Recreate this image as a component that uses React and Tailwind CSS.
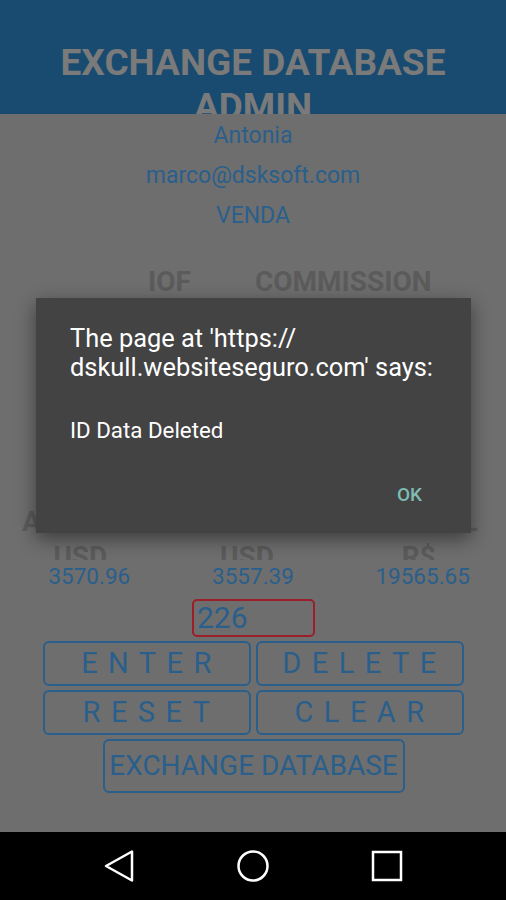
import React from "react";

const FONT = { fontFamily: "Roboto, 'Noto Sans', Arial, sans-serif" };

const LabelCut = ({ children, className = "" }) => (
  <div className={`h-[17px] overflow-hidden text-center ${className}`}>
    <span className="block text-[28px] leading-none font-bold text-[#5b5b5b]">
      {children}
    </span>
  </div>
);

const OutlineButton = ({ children, className = "" }) => (
  <button
    type="button"
    className={`flex items-center justify-center rounded-[6px] border-2 border-[#2a5f8c] text-[#2a5f8c] ${className}`}
  >
    {children}
  </button>
);

const NavBar = () => (
  <div className="h-[68px] bg-black flex items-center justify-center">
    <div className="flex items-center">
      <div className="w-[134px] flex justify-center">
        <svg width="30" height="32" viewBox="0 0 30 32" fill="none">
          <path d="M28 1.5 L28 30.5 L2 16 Z" stroke="white" strokeWidth="2.5" strokeLinejoin="round" />
        </svg>
      </div>
      <div className="w-[134px] flex justify-center">
        <svg width="32" height="32" viewBox="0 0 32 32" fill="none">
          <circle cx="16" cy="16" r="14.5" stroke="white" strokeWidth="2.5" />
        </svg>
      </div>
      <div className="w-[134px] flex justify-center">
        <svg width="32" height="32" viewBox="0 0 32 32" fill="none">
          <rect x="2" y="2" width="28" height="28" stroke="white" strokeWidth="2.5" />
        </svg>
      </div>
    </div>
  </div>
);

const AlertDialog = () => (
  <div className="absolute left-[36px] top-[298px] w-[435px] h-[235px] bg-[#434343] shadow-[0_6px_18px_rgba(0,0,0,0.45)] px-[34px] pt-[26px]">
    <p className="text-[25.4px] leading-[29px] text-white">
      The page at 'https://
      <br />
      dskull.websiteseguro.com' says:
    </p>
    <p className="mt-[34px] text-[22.3px] leading-[28px] text-white">ID Data Deleted</p>
    <div className="flex justify-end pr-[15px] mt-[37px]">
      <span className="text-[19px] font-medium text-[#7fbcb3]">OK</span>
    </div>
  </div>
);

export default function App() {
  return (
    <div className="relative w-[506px] h-[900px] overflow-hidden flex flex-col" style={FONT}>
      <div className="h-[832px] bg-[#6e6e6e] flex flex-col">
        {/* Header */}
        <div className="h-[114px] overflow-hidden bg-[#194b70] pt-[41px]">
          <h1 className="text-center text-[37px] leading-[44px] font-bold text-[#7a7a7a]">
            EXCHANGE DATABASE
            <br />
            ADMIN
          </h1>
        </div>

        {/* User info */}
        <div className="pt-[2px] flex flex-col text-[23px] text-[#2a5f8c]">
          <div className="h-10 flex items-center justify-center">Antonia</div>
          <div className="h-10 flex items-center justify-center">marco@dsksoft.com</div>
          <div className="h-10 flex items-center justify-center">VENDA</div>
        </div>

        {/* Column titles */}
        <div className="mt-[30px] flex text-[28px] leading-[32px] font-bold text-[#5b5b5b]">
          <span className="ml-[148px]">IOF</span>
          <span className="ml-[64px]">COMMISSION</span>
        </div>

        {/* Rows hidden under the dialog */}
        <div className="mt-[208px] flex justify-between pl-[22px] pr-[28px] text-[28px] leading-[32px] font-bold text-[#5b5b5b]">
          <span>AMOUNT</span>
          <span>TOTAL</span>
        </div>

        {/* Currency labels */}
        <div className="mt-[5px] grid grid-cols-3">
          <LabelCut className="-ml-[8px]">USD</LabelCut>
          <LabelCut className="-ml-[12px]">USD</LabelCut>
          <LabelCut className="-ml-[6px]">R$</LabelCut>
        </div>

        {/* Totals */}
        <div className="mt-[4px] grid grid-cols-3 text-[22.5px] leading-[24px] text-[#2a5f8c]">
          <span className="text-center ml-[10px]">3570.96</span>
          <span className="text-center">3557.39</span>
          <span className="text-center ml-[2px]">19565.65</span>
        </div>

        {/* ID input */}
        <div className="mt-[11px] flex justify-center">
          <div className="w-[123px] h-[38px] ml-[1px] rounded-[5px] border-2 border-[#9a1f28] flex items-center pl-[3px] text-[30px] leading-none text-[#2a5f8c]">
            226
          </div>
        </div>

        {/* Action buttons */}
        <div className="mt-[4px] flex flex-col items-center gap-[4px]">
          <div className="flex gap-[5px]">
            <OutlineButton className="w-[208px] h-[45px] text-[29px] tracking-[0.36em] pl-[10px]">ENTER</OutlineButton>
            <OutlineButton className="w-[208px] h-[45px] text-[29px] tracking-[0.36em] pl-[10px]">DELETE</OutlineButton>
          </div>
          <div className="flex gap-[5px]">
            <OutlineButton className="w-[208px] h-[45px] text-[29px] tracking-[0.36em] pl-[10px]">RESET</OutlineButton>
            <OutlineButton className="w-[208px] h-[45px] text-[29px] tracking-[0.36em] pl-[10px]">CLEAR</OutlineButton>
          </div>
          <OutlineButton className="w-[302px] h-[54px] text-[28px] ml-[1px]">EXCHANGE DATABASE</OutlineButton>
        </div>
      </div>

      <NavBar />

      <AlertDialog />
    </div>
  );
}
